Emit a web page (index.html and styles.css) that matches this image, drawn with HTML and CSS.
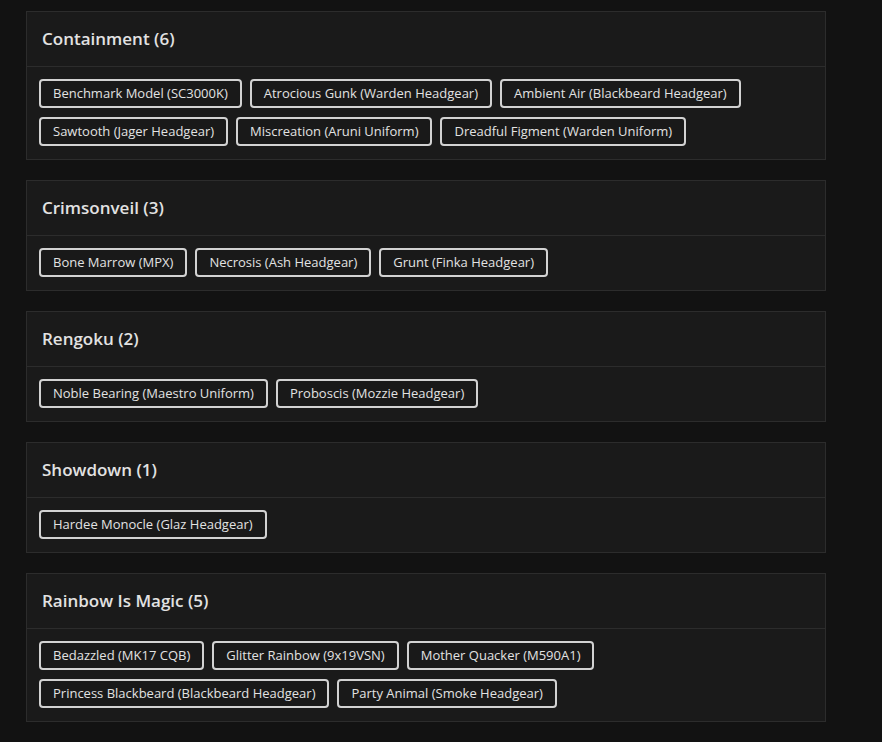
FILE: index.html
```html
<!DOCTYPE html>
<html lang="en">

<head>
    <meta charset="UTF-8">
    <meta name="viewport" content="width=device-width, initial-scale=1.0">
    <title>Bundles</title>
    <link rel="stylesheet" href="styles.css">
</head>

<body>
    <div class="list">
        <div class="card">
            <div class="card-head">Containment (6)</div>
            <div class="card-body">
                <span class="chip">Benchmark Model (SC3000K)</span>
                <span class="chip">Atrocious Gunk (Warden Headgear)</span>
                <span class="chip">Ambient Air (Blackbeard Headgear)</span>
                <span class="chip">Sawtooth (Jager Headgear)</span>
                <span class="chip">Miscreation (Aruni Uniform)</span>
                <span class="chip">Dreadful Figment (Warden Uniform)</span>
            </div>
        </div>

        <div class="card">
            <div class="card-head">Crimsonveil (3)</div>
            <div class="card-body">
                <span class="chip">Bone Marrow (MPX)</span>
                <span class="chip">Necrosis (Ash Headgear)</span>
                <span class="chip">Grunt (Finka Headgear)</span>
            </div>
        </div>

        <div class="card">
            <div class="card-head">Rengoku (2)</div>
            <div class="card-body">
                <span class="chip">Noble Bearing (Maestro Uniform)</span>
                <span class="chip">Proboscis (Mozzie Headgear)</span>
            </div>
        </div>

        <div class="card">
            <div class="card-head">Showdown (1)</div>
            <div class="card-body">
                <span class="chip">Hardee Monocle (Glaz Headgear)</span>
            </div>
        </div>

        <div class="card">
            <div class="card-head">Rainbow Is Magic (5)</div>
            <div class="card-body">
                <span class="chip">Bedazzled (MK17 CQB)</span>
                <span class="chip">Glitter Rainbow (9x19VSN)</span>
                <span class="chip">Mother Quacker (M590A1)</span>
                <span class="chip">Princess Blackbeard (Blackbeard Headgear)</span>
                <span class="chip">Party Animal (Smoke Headgear)</span>
            </div>
        </div>
    </div>
</body>

</html>
```

FILE: styles.css
```css
body {
    font-family: "Open Sans", Arial, sans-serif;
    background-color: #121212;
    color: #e2e2e2;
    margin: 0;
    padding: 0;
}

.list {
    width: 800px;
    margin-left: 26px;
    padding-top: 11px;
    display: flex;
    flex-direction: column;
    gap: 20px;
}

.card {
    background-color: #1a1a1a;
    border: 1px solid #2c2c2c;
}

.card-head {
    height: 54px;
    line-height: 54px;
    padding: 0 15px;
    font-size: 17px;
    font-weight: 600;
    color: #e2e2e2;
    border-bottom: 1px solid #2c2c2c;
}

.card-body {
    padding: 12px 12px 13px;
    display: flex;
    flex-wrap: wrap;
    gap: 9px 8px;
}

.chip {
    display: inline-block;
    height: 29px;
    line-height: 25px;
    padding: 0 12px;
    box-sizing: border-box;
    border: 2px solid #d2d2d2;
    border-radius: 4px;
    background-color: #191919;
    color: #e2e2e2;
    font-size: 13px;
}
```
